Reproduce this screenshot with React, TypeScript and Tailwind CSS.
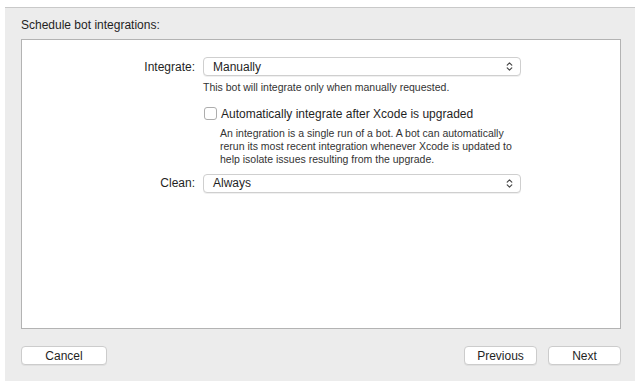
import { ChevronsUpDown } from 'lucide-react'

function Select({ value }: { value: string }) {
  return (
    <div className="flex h-[19px] w-[318px] items-center justify-between rounded-[4px] border border-[#cfcfcf] bg-white pl-[9px] pr-[5px] shadow-[0_1px_0_rgba(0,0,0,0.06)]">
      <span className="text-[12px] text-[#1f1f1f]">{value}</span>
      <ChevronsUpDown size={11} strokeWidth={2.5} className="text-[#444]" />
    </div>
  )
}

function Button({ label, width }: { label: string; width: string }) {
  return (
    <button
      className={`flex h-[19px] ${width} items-center justify-center rounded-[4px] border border-[#cccccc] bg-white text-[12px] text-[#1f1f1f] shadow-[0_1px_0_rgba(0,0,0,0.05)]`}
    >
      {label}
    </button>
  )
}

export default function App() {
  return (
    <div
      className="h-[387px] w-[638px] bg-white pl-[5px] pr-[3px] pt-[7px]"
      style={{ fontFamily: '"Liberation Sans", Arial, sans-serif' }}
    >
      <div className="flex h-[374px] flex-col border-t border-[#c9c9c9] bg-[#ececec] pl-[16px] pr-[14px]">
        <div className="pt-[10px] text-[12px] leading-[15px] text-[#1f1f1f]">Schedule bot integrations:</div>
        <div className="mt-[6px] h-[290px] border border-[#b3b3b3] bg-white pt-[17px]">
          <div className="flex items-center">
            <div className="w-[181px] pr-[8px] text-right text-[12px] text-[#1f1f1f]">Integrate:</div>
            <Select value="Manually" />
          </div>
          <div className="ml-[181px] mt-[4px] text-[10.5px] text-[#333]">
            This bot will integrate only when manually requested.
          </div>
          <div className="ml-[182px] mt-[9px] flex items-center gap-[4px]">
            <div className="h-[13px] w-[13px] rounded-[3px] border border-[#adadad] bg-white" />
            <span className="text-[12px] text-[#1f1f1f]">Automatically integrate after Xcode is upgraded</span>
          </div>
          <div className="ml-[198px] mt-[4px] w-[292px] text-[10.5px] leading-[13px] text-[#333]">
            An integration is a single run of a bot. A bot can automatically rerun its most recent integration whenever Xcode is updated to help isolate issues resulting from the upgrade.
          </div>
          <div className="mt-[8px] flex items-center">
            <div className="w-[181px] pr-[8px] text-right text-[12px] text-[#1f1f1f]">Clean:</div>
            <Select value="Always" />
          </div>
        </div>
        <div className="mt-[17px] flex items-center">
          <Button label="Cancel" width="w-[86px]" />
          <div className="flex-1" />
          <Button label="Previous" width="w-[73px]" />
          <div className="w-[11px]" />
          <Button label="Next" width="w-[73px]" />
        </div>
      </div>
    </div>
  )
}
